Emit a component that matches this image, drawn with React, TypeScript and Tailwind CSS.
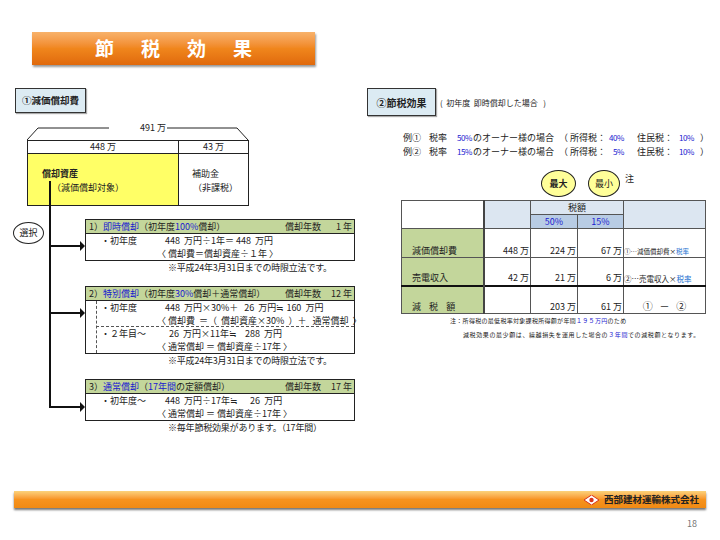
import React from 'react';

const B = ({ children }: { children: React.ReactNode }) => <span className="text-[#1a1ad0]">{children}</span>;

type PlanProps = {
  title: React.ReactNode;
  years: string;
  note: string;
  className: string;
  children: React.ReactNode;
};

const Plan = ({ title, years, note, className, children }: PlanProps) => (
  <div className={className}>
    <div className="ml-[70px] w-[270px] border border-[#222]">
      <div className="flex h-[14px] items-center justify-between border-b border-[#222] bg-[#c3d69b] pl-[3px] pr-[2px]">
        <span>{title}</span>
        <span className="flex w-[67px] justify-between">
          <span>償却年数</span>
          <span>{years}</span>
        </span>
      </div>
      {children}
    </div>
    <div className="ml-[153px] h-[14px] whitespace-nowrap leading-[14px] tracking-[-0.2px]">{note}</div>
  </div>
);

const Row = ({ pl, children }: { pl: string; children: React.ReactNode }) => (
  <div className={`h-[13px] whitespace-pre leading-[13px] ${pl}`}>{children}</div>
);

// 行頭のラベルと計算式の列を揃える
const Calc = ({ w, label, children }: { w: string; label: string; children: React.ReactNode }) => (
  <div className="flex h-[13px] whitespace-pre pl-[15px] leading-[13px]">
    <span className={w}>{label}</span>
    <span>{children}</span>
  </div>
);

const headCell = 'border border-[#555] bg-[#dce6f1] p-0';
const numCell = 'border border-[#555] p-0 pr-[1px] text-right align-bottom';
const labelCell = 'border border-[#555] border-r-2 border-r-[#444] bg-[#c3d69b] p-0 pl-[10px] align-bottom';
const rateCell = 'border border-[#555] bg-[#b8cce4] p-0 text-center leading-[13px] text-[#1a1ad0]';

const ExampleLine = ({ no, rate, income, right }: { no: string; rate: string; income: string; right?: boolean }) => (
  <div className="flex whitespace-nowrap">
    <span className="w-[26px]">{no}</span>
    <span className="w-[28px]">税率</span>
    <span className="w-[16px] text-[8px] tracking-[-0.5px] text-[#1a1ad0]">{rate}</span>
    <span className="w-[86px]">のオーナー様の場合</span>
    <span className="w-[50px] whitespace-pre">{'（ 所得税：'}</span>
    <span className={right ? 'w-[28px] pl-[4px] text-[8px] tracking-[-0.5px] text-[#1a1ad0]' : 'w-[28px] text-[8px] tracking-[-0.5px] text-[#1a1ad0]'}>{income}</span>
    <span className="w-[42px]">住民税：</span>
    <span className="w-[21px] text-[8px] tracking-[-0.5px] text-[#1a1ad0]">10%</span>
    <span>）</span>
  </div>
);

export default function App() {
  return (
    <div className="flex h-[540px] w-[720px] flex-col overflow-hidden bg-white pt-[32px] text-[9px] text-[#222]" style={{ fontFamily: '"Noto Sans CJK JP", "Liberation Sans", sans-serif' }}>
      <div className="ml-[32px] flex h-[33px] w-[283px] items-center justify-center gap-[27px] bg-gradient-to-b from-[#f8b26a] via-[#f0861c] to-[#e0690c] text-[19px] font-bold text-white shadow-[1px_2px_2px_#999]">
        <span>節</span>
        <span>税</span>
        <span>効</span>
        <span>果</span>
      </div>

      <div className="mt-[23px] flex h-[350px]">
        {/* 減価償却費 */}
        <div className="relative w-[360px] pl-[15px]">
          <div className="flex h-[25px] w-[71px] items-center justify-center border border-[#333] bg-[#dcebf3] text-[9.5px] font-bold shadow-[1px_1px_1px_#aaa]">①減価償却費</div>

          <div className="ml-[12px] mt-[14px] w-[222px]">
            <div className="relative h-[13px]">
              <svg className="absolute left-0 top-0" width="222" height="13" fill="none" stroke="#222" strokeWidth="1">
                <path d="M0 13 L11 1 H82" />
                <path d="M140 1 H210 L221 13" />
              </svg>
              <span className="absolute left-[113px] top-[-6px]">491 万</span>
            </div>
            <div className="flex h-[66px] border-x border-y border-[#222]">
              <div className="flex w-[151px] flex-col border-r border-[#222]">
                <div className="h-[13px] border-b border-[#222] text-center leading-[12px]">448 万</div>
                <div className="flex-1 bg-[#ffff66] pl-[14px] pt-[13px] leading-[14px]">
                  <div className="font-bold">償却資産</div>
                  <div className="pl-[10px]">（減価償却対象）</div>
                </div>
              </div>
              <div className="flex flex-1 flex-col">
                <div className="h-[13px] border-b border-[#222] text-center leading-[12px]">43 万</div>
                <div className="pl-[13px] pt-[13px] leading-[14px]">
                  <div>補助金</div>
                  <div className="pl-[1px]">（非課税）</div>
                </div>
              </div>
            </div>
          </div>

          {/* 選択の矢印 */}
          <svg className="absolute left-0 top-0" width="90" height="350" fill="#111" stroke="none">
            <rect x="49" y="93" width="2" height="227" />
            <rect x="50" y="157" width="30" height="2" />
            <rect x="50" y="224" width="30" height="2" />
            <rect x="50" y="318" width="30" height="2" />
            <path d="M80 153 L85 158 L80 163 Z" />
            <path d="M80 220 L85 225 L80 230 Z" />
            <path d="M80 314 L85 319 L80 324 Z" />
          </svg>
          <div className="absolute left-[13px] top-[134px] flex h-[22px] w-[31px] items-center justify-center rounded-[50%] border border-[#222] bg-white">選択</div>

          <Plan
            className="mt-[13px]"
            title={<>1）<B>即時償却</B>（初年度<B>100%</B>償却）</>}
            years="1 年"
            note="※平成24年3月31日までの時限立法です。"
          >
            <Calc w="w-[64px]" label="・初年度">{'448  万円÷1年＝ 448  万円'}</Calc>
            <Row pl="pl-[71px]">〈 償却費＝償却資産÷１年 〉</Row>
          </Plan>

          <Plan
            className="mt-[11px]"
            title={<>2）<B>特別償却</B>（初年度<B>30%</B>償却＋通常償却）</>}
            years="12 年"
            note="※平成24年3月31日までの時限立法です。"
          >
            <div className="relative">
              <div className="absolute bottom-0 left-[10px] top-0 border-l border-dashed border-[#555]" />
              <div className="ml-[10px] h-[26px] border-b border-dashed border-[#555]">
                <div className="flex h-[13px] whitespace-pre pl-[5px] leading-[13px]">
                  <span className="w-[64px]">・初年度</span>
                  <span>{'448  万円×30%＋   26  万円≒ 160  万円'}</span>
                </div>
                <Row pl="pl-[61px]">{'〈 償却費  ＝（  償却資産×30%  ）＋   通常償却  〉'}</Row>
              </div>
              <Calc w="w-[68px]" label="・２年目～">{'26  万円×11年≒    288  万円'}</Calc>
              <Row pl="pl-[71px]">〈 通常償却 ＝ 償却資産÷17年 〉</Row>
            </div>
          </Plan>

          <Plan
            className="mt-[11px]"
            title={<>3）<B>通常償却</B>（<B>17年間</B>の定額償却）</>}
            years="17 年"
            note="※毎年節税効果があります。（17年間）"
          >
            <Calc w="w-[64px]" label="・初年度～">{'448  万円÷17年≒      26  万円'}</Calc>
            <Row pl="pl-[71px]">〈 通常償却 ＝ 償却資産÷17年 〉</Row>
          </Plan>
        </div>

        {/* 節税効果 */}
        <div className="relative w-[360px] pl-[7px]">
          <div className="flex items-center">
            <div className="flex h-[28px] w-[69px] items-center justify-center border border-[#333] bg-[#dcebf3] text-[10px] font-bold shadow-[1px_1px_1px_#aaa]">②節税効果</div>
            <span className="ml-[4px] mt-[1px] whitespace-pre text-[8px]">{'(  初年度  即時償却した場合   )'}</span>
          </div>

          <div className="ml-[36px] mt-[15px] leading-[14px]">
            <ExampleLine no="例①" rate="50%" income="40%" />
            <ExampleLine no="例②" rate="15%" income="5%" right />
          </div>

          <div className="mt-[11px] flex h-[27px] pl-[174px]">
            <div className="flex h-[27px] w-[35px] items-center justify-center rounded-[50%] border border-[#222] bg-[#ffff99] font-bold">最大</div>
            <div className="ml-[12px] flex h-[27px] w-[32px] items-center justify-center rounded-[50%] border border-[#222] bg-[#ffff99]">最小</div>
            <span className="ml-[5px] mt-[2px]">注</span>
          </div>

          <table className="ml-[34px] mt-[3px] w-[304px] table-fixed border-collapse border border-[#555]">
            <colgroup>
              <col className="w-[82px]" />
              <col className="w-[47px]" />
              <col className="w-[47px]" />
              <col className="w-[46px]" />
              <col className="w-[82px]" />
            </colgroup>
            <tbody>
              <tr className="h-[14px]">
                <td rowSpan={2} className="border border-[#555] border-r-2 border-r-[#444] p-0" />
                <td rowSpan={2} className={headCell} />
                <td colSpan={2} className={`${headCell} text-center leading-[13px]`}>税額</td>
                <td rowSpan={2} className={headCell} />
              </tr>
              <tr className="h-[14px]">
                <td className={rateCell}>50%</td>
                <td className={rateCell}>15%</td>
              </tr>
              <tr className="h-[29px]">
                <td className={labelCell}>減価償却費</td>
                <td className={numCell}>448 万</td>
                <td className={numCell}>224 万</td>
                <td className={numCell}>67 万</td>
                <td className="whitespace-nowrap border border-[#555] p-0 align-bottom text-[6.5px] leading-[12px]">①…減価償却費×<span className="text-[#1a6fd0]">税率</span></td>
              </tr>
              <tr className="h-[28px] border-b-2 border-[#111]">
                <td className={labelCell}>売電収入</td>
                <td className={numCell}>42 万</td>
                <td className={numCell}>21 万</td>
                <td className={numCell}>6 万</td>
                <td className="whitespace-nowrap border border-[#555] p-0 align-bottom text-[7.5px] leading-[12px]">②…売電収入×<span className="text-[#1a6fd0]">税率</span></td>
              </tr>
              <tr className="h-[28px]">
                <td className={`${labelCell} whitespace-pre`}>{'減    税    額'}</td>
                <td className={numCell} />
                <td className={numCell}>203 万</td>
                <td className={numCell}>61 万</td>
                <td className="whitespace-pre border border-[#555] p-0 text-center align-bottom text-[10px]">{'①   －   ②'}</td>
              </tr>
            </tbody>
          </table>

          <div className="text-[6px] leading-[14px] tracking-[0.3px]">
            <div className="ml-[83px]">注：所得税の最低税率対象課税所得額が年間<span className="text-[#1a1ad0]">１９５万円</span>のため</div>
            <div className="ml-[96px] tracking-[0.6px]">減税効果の最少額は、繰越損失を運用した場合の<span className="text-[#1a1ad0]">３年間</span>での減税額となります。</div>
          </div>
        </div>
      </div>

      <div className="ml-[14px] mt-[53px] flex h-[17px] w-[692px] shrink-0 items-center justify-end bg-gradient-to-b from-[#fbd27a] via-[#f7931e] to-[#f08a14] pr-[7px] text-[9.5px] font-bold shadow-[0_2px_2px_#777]">
        <svg width="15" height="10" viewBox="0 0 15 10" className="mr-[5px]">
          <path d="M7.5 0 L15 5 L7.5 10 L0 5 Z" fill="#fff" stroke="#d8341c" strokeWidth="1" />
          <circle cx="7.5" cy="5" r="2.2" fill="#d8341c" />
        </svg>
        西部建材運輸株式会社
      </div>
      <div className="mt-[9px] pr-[23px] text-right text-[9px] leading-[14px] text-[#777]">18</div>
    </div>
  );
}
